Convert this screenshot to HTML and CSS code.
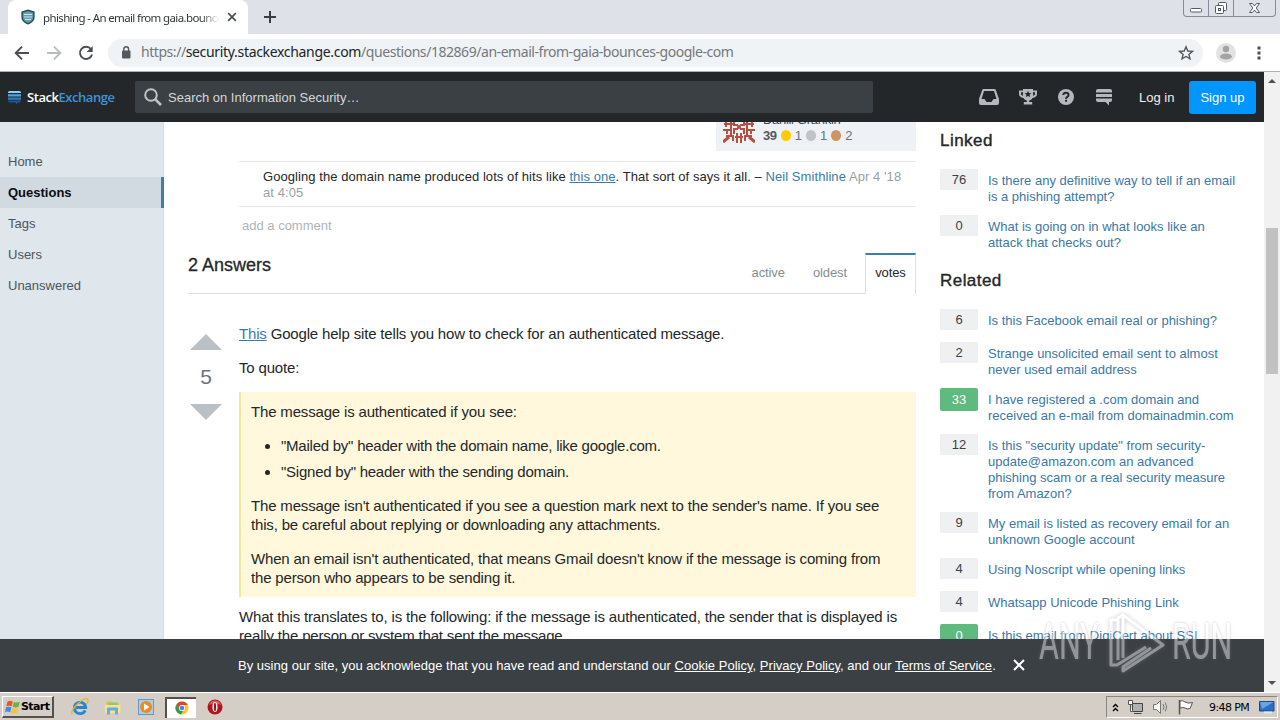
FILE: index.html
```html
<!DOCTYPE html>
<html lang="en">
<head>
  <meta charset="UTF-8">
  <title>phishing - An email from gaia.bounces.google.com</title>
  <link rel="stylesheet" href="styles.css">
</head>
<body>
  <div class="tabstrip">
    <div class="tab">
      <svg class="favicon" width="16" height="16" viewBox="0 0 16 16"><path d="M8 0.5 14.6 2.6V8c0 3.8-2.800 6-6.600 7.500C4.200 14 1.400 11.800 1.400 8V2.600z" fill="#2b4a57"/><path d="M8 2 13.200 3.700V8c0 3-2.200 4.800-5.200 6-3-1.200-5.200-3-5.200-6V3.700z" fill="#5d9fb0"/><path d="M4 5.500h8M4 8h8M5 10.500h6" stroke="#cfe6ea" stroke-width="1.200"/></svg>
      <span class="tab-title">phishing - An email from gaia.bounce</span>
      <svg class="tab-close" width="10" height="10" viewBox="0 0 10 10"><path d="M1.200 1.200 8.800 8.800M8.800 1.200 1.200 8.800" stroke="#4c5054" stroke-width="1.700"/></svg>
    </div>
    <svg class="new-tab" width="12" height="12" viewBox="0 0 12 12"><path d="M6 0v12M0 6h12" stroke="#3a3d42" stroke-width="2"/></svg>
    <div class="window-buttons">
      <span class="wb"><svg width="24" height="16" viewBox="0 0 24 16"><rect x="6.500" y="8.500" width="11" height="3.500" rx="1" fill="#fff" stroke="#555b66"/></svg></span>
      <span class="wb"><svg width="24" height="16" viewBox="0 0 24 16"><rect x="9.500" y="2.500" width="8" height="8" rx="1" fill="#fff" stroke="#555b66"/><rect x="6.500" y="5.500" width="8" height="8" rx="1" fill="#fff" stroke="#555b66"/><rect x="9.500" y="8.500" width="2" height="2" fill="none" stroke="#555b66"/></svg></span>
      <span class="wb wb-close"><svg width="40" height="16" viewBox="0 0 40 16"><path d="M15.500 3.500h3l2 2.500 2-2.500h3l-3.300 4.500 3.300 4.500h-3l-2-2.500-2 2.500h-3l3.300-4.500z" fill="#fff" stroke="#555b66"/></svg></span>
    </div>
  </div>

  <div class="toolbar">
    <svg class="nav-icon" width="16" height="16" viewBox="0 0 16 16"><path d="M15 8H2.500M8 1.700 1.700 8 8 14.300" fill="none" stroke="#4b4f54" stroke-width="1.900"/></svg>
    <svg class="nav-icon" width="16" height="16" viewBox="0 0 16 16"><path d="M1 8h12.500M8 1.700 14.300 8 8 14.300" fill="none" stroke="#b9bbbe" stroke-width="1.900"/></svg>
    <svg class="nav-icon" width="16" height="16" viewBox="0 0 16 16"><path d="M13 4.200A6.100 6.100 0 1 0 14 9.500" fill="none" stroke="#4b4f54" stroke-width="1.900"/><path d="M14.700 1v6h-6z" fill="#4b4f54"/></svg>
    <div class="address">
      <svg class="lock" width="10" height="13" viewBox="0 0 10 13"><rect x="1" y="4.500" width="8.500" height="8" rx="1" fill="#55595e"/><path d="M2.800 5V3.200a2.400 2.400 0 0 1 4.800 0V5" fill="none" stroke="#55595e" stroke-width="1.400"/></svg>
      <span class="url">https://<b>security.stackexchange.com</b>/questions/182869/an-email-from-gaia-bounces-google-com</span>
      <svg class="star" width="16" height="16" viewBox="0 0 16 16"><path d="M8 1.800 9.800 6l4.600.4-3.500 3 1.100 4.500L8 11.500l-4 2.400 1.100-4.500-3.500-3L6.200 6z" fill="none" stroke="#54585d" stroke-width="1.400"/></svg>
    </div>
    <svg class="avatar" width="20" height="20" viewBox="0 0 20 20"><circle cx="10" cy="10" r="10" fill="#e2e2e2"/><circle cx="10" cy="6" r="3.200" fill="#a3a3a3"/><ellipse cx="10" cy="13.500" rx="6" ry="3" fill="#a3a3a3"/></svg>
    <svg class="menu-dots" width="4" height="14" viewBox="0 0 4 14"><path d="M.5.500h3v3h-3zM.5 5.500h3v3h-3zM.5 10.500h3v3h-3z" fill="#4b4f54"/></svg>
  </div>

  <div class="viewport">
    <div class="page">
      <header class="topbar">
        <div class="logo">
          <svg width="13" height="15" viewBox="0 0 13 15"><path d="M0 2.500Q0 1 1.500 1h10Q13 1 13 2.500V3H0z" fill="#8fd0f5"/><path d="M0 4.200h13v2.300H0z" fill="#4fa3e0"/><path d="M0 7.500h13v2.300H0z" fill="#2c7cc4"/><path d="M0 10.600h13q0 1.900-1.500 1.900H10L8 14.500v-2H1.500Q0 12.500 0 10.600z" fill="#1f5796"/></svg>
          <span class="logo-text">Stack<em>Exchange</em></span>
        </div>
        <div class="search">
          <svg width="20" height="20" viewBox="0 0 20 20"><circle cx="8" cy="8" r="5.800" fill="none" stroke="#c0c4c8" stroke-width="2"/><path d="m12.300 12.300 5.700 5.700" stroke="#c0c4c8" stroke-width="2.600"/></svg>
          <span>Search on Information Security…</span>
        </div>
        <div class="top-icons">
          <svg width="20" height="18" viewBox="0 0 20 18"><path fill-rule="evenodd" d="M4.500 1h11q1 0 1.300 1L20 11v4q0 2-2 2H2q-2 0-2-2v-4L3.200 2Q3.500 1 4.500 1zM5 3 2.500 11h3l2 3h5l2-3h3L15 3z" fill="#b5b9bd"/></svg>
          <svg width="18" height="18" viewBox="0 0 18 18"><path fill-rule="evenodd" d="M4 1h10v1.500h4V6q0 3-4.500 4-1 2-3.300 2.500V14h3v2.500H4.800V14h3v-1.500Q5.500 12 4.500 10 0 9 0 6V2.500h4zM2 4.300V6q0 1.200 2 1.800V4.300zM14 4.300v3.500q2-.6 2-1.800V4.300z" fill="#b5b9bd"/><path d="m9 2.800 1 2.200 2.300.2-1.700 1.600.5 2.300L9 7.900 6.900 9.100l.5-2.300-1.700-1.600L8 5z" fill="#242729"/></svg>
          <svg width="18" height="18" viewBox="0 0 18 18"><circle cx="9" cy="9" r="8" fill="#b5b9bd"/><path d="M6.300 7Q6.500 4.700 9 4.700T11.600 7Q11.600 8.200 10.300 8.900T9.100 10.800M9.100 11.800v2" fill="none" stroke="#242729" stroke-width="1.900"/></svg>
          <svg width="18" height="18" viewBox="0 0 18 18"><path d="M3 1h12q2 0 2 2v1.500H1V3q0-2 2-2zM1 6h16v3H1zM1 10.500h16V12q0 2-2 2h-1v3.500L10.500 14H3q-2 0-2-2z" fill="#b5b9bd"/></svg>
        </div>
        <a class="login">Log in</a>
        <a class="signup">Sign up</a>
      </header>

      <div class="content">
        <nav class="left-nav">
          <a>Home</a>
          <a class="current">Questions</a>
          <a>Tags</a>
          <a>Users</a>
          <a>Unanswered</a>
        </nav>

        <main class="main">
          <div class="user-card">
            <svg width="32" height="32" viewBox="0 0 32 32"><g stroke="#b5503f" stroke-width="2" fill="none"><path d="M1 13h9M22 13h9M0 19h9M23 19h9M3 25h8M21 25h8M3 8v8M8 8v16M24 8v16M29 8v8M4 18v5M28 18v5"/><path d="M11 9v5h4M21 9v5h-4M11 23v-5h4M21 23v-5h-4M12 26h8M14 22v10M18 22v10M10 25v5M22 25v5"/><path d="M0 31l6-5M32 31l-6-5" stroke-width="3"/></g><circle cx="16" cy="16" r="2" fill="#b5503f"/></svg>
            <div class="user-info">
              <a class="user-name">Daniil Grankin</a>
              <div class="rep"><b>39</b><i class="gold"></i>1<i class="silver"></i>1<i class="bronze"></i>2</div>
            </div>
          </div>

          <div class="comments">
            <p class="comment">Googling the domain name produced lots of hits like <a class="under">this one</a>. That sort of says it all. – <a>Neil Smithline</a> <small>Apr 4 '18<br>at 4:05</small></p>
            <a class="add-comment">add a comment</a>
          </div>

          <div class="answers-head">
            <h2>2 Answers</h2>
            <div class="sort">
              <a>active</a>
              <a>oldest</a>
              <a class="on">votes</a>
            </div>
          </div>

          <div class="answer">
            <div class="votes">
              <span class="up"></span>
              <span class="count">5</span>
              <span class="down"></span>
            </div>
            <div class="post">
              <p><a class="under">This</a> Google help site tells you how to check for an authenticated message.</p>
              <p>To quote:</p>
              <blockquote>
                <p>The message is authenticated if you see:</p>
                <ul>
                  <li>"Mailed by" header with the domain name, like google.com.</li>
                  <li>"Signed by" header with the sending domain.</li>
                </ul>
                <p>The message isn't authenticated if you see a question mark next to the sender's name. If you see<br>this, be careful about replying or downloading any attachments.</p>
                <p>When an email isn't authenticated, that means Gmail doesn't know if the message is coming from<br>the person who appears to be sending it.</p>
              </blockquote>
              <p>What this translates to, is the following: if the message is authenticated, the sender that is displayed is<br>really the person or system that sent the message.</p>
            </div>
          </div>
        </main>

        <aside class="sidebar">
          <h3>Linked</h3>
          <div class="link-row"><span class="score">76</span><a>Is there any definitive way to tell if an email<br>is a phishing attempt?</a></div>
          <div class="link-row"><span class="score">0</span><a>What is going on in what looks like an<br>attack that checks out?</a></div>
          <h3 class="related">Related</h3>
          <div class="link-row"><span class="score">6</span><a>Is this Facebook email real or phishing?</a></div>
          <div class="link-row"><span class="score">2</span><a>Strange unsolicited email sent to almost<br>never used email address</a></div>
          <div class="link-row"><span class="score accepted">33</span><a>I have registered a .com domain and<br>received an e-mail from domainadmin.com</a></div>
          <div class="link-row"><span class="score">12</span><a>Is this "security update" from security-<br>update@amazon.com an advanced<br>phishing scam or a real security measure<br>from Amazon?</a></div>
          <div class="link-row"><span class="score">9</span><a>My email is listed as recovery email for an<br>unknown Google account</a></div>
          <div class="link-row"><span class="score">4</span><a>Using Noscript while opening links</a></div>
          <div class="link-row"><span class="score">4</span><a>Whatsapp Unicode Phishing Link</a></div>
          <div class="link-row"><span class="score accepted">0</span><a>Is this email from DigiCert about SSL</a></div>
        </aside>
      </div>

      <div class="cookie-bar">
        <span class="cookie-text">By using our site, you acknowledge that you have read and understand our <u>Cookie Policy</u>, <u>Privacy Policy</u>, and our <u>Terms of Service</u>.</span>
        <svg width="12" height="12" viewBox="0 0 12 12"><path d="m1 1 10 10M11 1 1 11" stroke="#fff" stroke-width="2"/></svg>
      </div>
    </div>

    <div class="scrollbar">
      <span class="arrow-up"></span>
      <span class="thumb"></span>
      <span class="arrow-down"></span>
    </div>
  </div>

  <div class="taskbar">
    <div class="start">
      <svg width="16" height="16" viewBox="0 0 16 16"><path d="M2.500 2.500Q5 1 7.800 2.500L6.700 7.300Q4 6 1.300 7.300z" fill="#e8562a"/><path d="M8.800 3Q11.500 4.300 14.800 2.800L13.500 7.800Q10.500 9 7.700 7.800z" fill="#6cb33f"/><path d="M1 8.400Q3.500 7.200 6.400 8.400L5.200 13.200Q2.500 12 0 13z" fill="#3b8ede"/><path d="M7.400 8.900Q10.200 10.200 13.200 8.900L12 13.700Q9 15 6.200 13.700z" fill="#f6c231"/></svg>
      <b>Start</b>
    </div>
    <div class="quick">
      <svg width="18" height="18" viewBox="0 0 18 18"><path d="M14.200 12.300A5.700 5.700 0 1 1 14.700 9.500H5" fill="none" stroke="#2786d2" stroke-width="2.800"/><path d="M1 16.500Q-.5 13 6 6.500T16.500 1Q18 2.500 15.500 6" fill="none" stroke="#e8b52c" stroke-width="1.300"/></svg>
      <svg width="18" height="18" viewBox="0 0 18 18"><path d="M2 3h6l1 2h6.500v10H2z" fill="#e9c962"/><path d="M3.500 4.500h10v4h-10z" fill="#8cc77c"/><path d="M1 7h15.500v8H1z" fill="#f7e293"/><path d="M3 16.500V10.500q0-1 1-1h9q1 0 1 1v6h-3v-4H6v4z" fill="#5eb0e0"/></svg>
      <svg width="18" height="18" viewBox="0 0 18 18"><rect x="1.500" y="1.500" width="15" height="15" fill="#a9cfed" stroke="#5a9bd0"/><circle cx="9" cy="9" r="6" fill="#f08a1c"/><path d="M7 5.500 12.500 9 7 12.500z" fill="#fff"/></svg>
      <span class="active-app"><svg width="14" height="14" viewBox="0 0 14 14"><circle cx="7" cy="7" r="6.500" fill="#f9c923"/><path d="M1.300 3.800A6.500 6.500 0 0 1 12.800 4H7L4.500 9z" fill="#dc4437"/><path d="M1.300 3.800 4.500 9l3.500 1-2 3.400A6.500 6.500 0 0 1 1.300 3.800z" fill="#2c9c55"/><circle cx="7" cy="7" r="3" fill="#fff"/><circle cx="7" cy="7" r="2.300" fill="#4680e8"/></svg></span>
      <svg width="16" height="16" viewBox="0 0 16 16"><circle cx="8" cy="8" r="7.500" fill="#b3151c"/><path d="M2 6a6.300 6.300 0 0 1 12 0Q8 3 2 6z" fill="#dc5b5b"/><ellipse cx="8" cy="8" rx="2.600" ry="5" fill="#f3e6e6"/><ellipse cx="8" cy="8" rx="1" ry="4.200" fill="#931118"/></svg>
    </div>
    <div class="tray">
      <svg width="7" height="9" viewBox="0 0 7 9"><path d="M1 4 3.500 1.500 6 4M1 8 3.500 5.500 6 8" fill="none" stroke="#000" stroke-width="1.400"/></svg>
      <svg width="17" height="16" viewBox="0 0 17 16"><path d="M5.500 4.500h10v8h-10z" fill="#aeb0b2" stroke="#444"/><path d="M7 14.500h7.500" stroke="#444"/><path d="M1.500 1.500h4v4h-4zM3.500 5.500v7h2" fill="#fff" stroke="#555"/></svg>
      <svg width="17" height="16" viewBox="0 0 17 16"><path d="M1.500 5.500h3l4-4v13l-4-4h-3z" fill="#fff" stroke="#777"/><path d="M11 5q2 3 0 6M13.200 3.500q3 4.500 0 9" fill="none" stroke="#777"/></svg>
      <svg width="17" height="16" viewBox="0 0 17 16"><path d="M2.500 1v14.500" stroke="#555" stroke-width="1.500"/><path d="M3 2q3-1 5 1 3 2 7.500.5L13 9.500q-3 1-5-.5-2-1-5 0z" fill="#fff" stroke="#555"/></svg>
      <span class="clock">9:48 PM</span>
      <svg width="16" height="14" viewBox="0 0 16 14"><path d="M.5 1.500h14.500v9.500H.5z" fill="#2a6fc4" stroke="#234a80"/><path d="M1 2h13.500L3 9z" fill="#69a4e6"/><path d="M5 12.500h8" stroke="#dfe7ef" stroke-width="2"/></svg>
    </div>
  </div>

  <div class="watermark">
    <span>ANY</span>
    <svg width="60" height="64" viewBox="0 0 60 64"><path d="M17 48V5L57 35 17 61V57L45 38M11 10H5V55L11 55 40 37M17 5 12 8V50" fill="none" stroke="#fff" stroke-width="3" stroke-linejoin="round"/></svg>
    <span>RUN</span>
  </div>
</body>
</html>
```
FILE: styles.css
```css
* {
  box-sizing: border-box;
}

body {
  margin: 0;
  width: 1280px;
  height: 720px;
  overflow: hidden;
  display: flex;
  flex-direction: column;
  position: relative;
  font-family: "Liberation Sans", Arial, sans-serif;
  font-size: 13px;
  color: #242729;
}

svg {
  display: block;
  flex: none;
}

/* browser chrome */
.tabstrip {
  height: 34px;
  flex: none;
  display: flex;
  align-items: center;
  background: #dee1e8;
  padding-left: 8px;
}

.tab {
  width: 240px;
  height: 34px;
  padding: 0 11px 0 12px;
  display: flex;
  align-items: center;
  background: #fff;
  border-radius: 8px 8px 0 0;
}

.tab-title {
  width: 176px;
  margin: 0 8px 0 7px;
  overflow: hidden;
  white-space: nowrap;
  font-family: "Noto Sans", sans-serif;
  font-size: 11.5px;
  letter-spacing: -0.63px;
  color: #33363a;
  -webkit-mask-image: linear-gradient(90deg, #000 90%, transparent);
}

.new-tab {
  margin-left: 16px;
}

.window-buttons {
  margin: 0 4px 0 auto;
  align-self: flex-start;
  display: flex;
  height: 17px;
  border: 1px solid #858b98;
  border-top: 0;
  border-radius: 0 0 4px 4px;
}

.wb {
  width: 25px;
  border-right: 1px solid #858b98;
}

.wb-close {
  width: 41px;
  border-right: 0;
}

.toolbar {
  height: 38px;
  flex: none;
  display: flex;
  align-items: center;
  padding-left: 14px;
  background: #fff;
  border-bottom: 1px solid #aeb1b4;
}

.nav-icon {
  margin-right: 16px;
}

.address {
  width: 1095px;
  height: 28px;
  margin-left: -2px;
  border-radius: 14px;
  background: #f0f3f6;
  display: flex;
  align-items: center;
  padding: 0 9px 0 13px;
}

.url {
  margin: -2px 0 0 10px;
  font-family: "Noto Sans", sans-serif;
  font-size: 14px;
  letter-spacing: -0.45px;
  color: #74787d;
  white-space: nowrap;
}

.url b {
  font-weight: normal;
  letter-spacing: -0.32px;
  color: #202327;
}

.star {
  margin-left: auto;
}

.avatar {
  margin-left: 13px;
}

.menu-dots {
  margin-left: 21px;
}

.viewport {
  height: 620px;
  flex: none;
  display: flex;
}

.page {
  width: 1264px;
  position: relative;
  overflow: hidden;
  background: #fff;
}

/* site header */
.topbar {
  height: 50px;
  display: flex;
  align-items: center;
  background: #242729;
  position: relative;
  z-index: 2;
}

.logo {
  width: 135px;
  padding-left: 8px;
  display: flex;
  align-items: center;
}

.logo-text {
  margin-left: 6px;
  font-family: "Open Sans", sans-serif;
  font-size: 13px;
  font-weight: 600;
  letter-spacing: -0.45px;
  color: #fff;
}

.logo-text em {
  font-style: normal;
  color: #3e94d8;
}

.search {
  width: 738px;
  height: 32px;
  background: #3b4045;
  border-radius: 2px;
  display: flex;
  align-items: center;
  padding-left: 8px;
  color: #d4d7da;
}

.search span {
  margin-left: 5px;
}

.top-icons {
  margin-left: 106px;
  display: flex;
  align-items: center;
  gap: 20px;
}

.login {
  margin-left: 26px;
  color: #eff0f1;
}

.signup {
  margin: 0 8px 0 auto;
  width: 67px;
  height: 33px;
  line-height: 33px;
  text-align: center;
  border-radius: 3px;
  background: #0095ff;
  color: #fff;
}

.content {
  height: 570px;
  display: flex;
}

.left-nav {
  width: 164px;
  padding-top: 24px;
  background: #dfe6ec;
  border-right: 1px solid #d6dde3;
  color: #4d555c;
}

.left-nav a {
  display: block;
  height: 31px;
  line-height: 31px;
  padding-left: 8px;
}

.left-nav .current {
  background: #d2dae1;
  border-right: 3px solid #3f7fa5;
  margin-right: -1px;
  color: #0c0d0e;
  font-weight: bold;
}

.main {
  width: 728px;
  margin-left: 24px;
}

/* scrolled halfway under the site header */
.user-card {
  width: 200px;
  height: 50px;
  margin: -21px 0 0 auto;
  padding: 10px 7px;
  display: flex;
  background: #eef1f5;
}

.user-info {
  margin-left: 8px;
  line-height: 17px;
  color: #6a737c;
}

.user-name {
  letter-spacing: -0.3px;
  color: #3b4a5a;
}

.rep {
  display: flex;
  align-items: center;
  margin-top: -1px;
}

.rep b {
  letter-spacing: -0.4px;
  color: #535a60;
}

.rep i {
  width: 10px;
  height: 11px;
  border-radius: 50%;
  margin: 0 4px;
}

.gold { background: #ffcc01; }
.silver { background: #bfc4c8; }
.bronze { background: #cf9463; }

.comments {
  margin: 10px 0 0 51px;
}

.comment {
  height: 46px;
  margin: 0;
  padding: 7px 0 0 24px;
  border-top: 1px solid #e4e6e8;
  border-bottom: 1px solid #e4e6e8;
  line-height: 16px;
  letter-spacing: 0.07px;
  white-space: nowrap;
}

.comment a,
.post a {
  color: #3a7baa;
}

.under {
  text-decoration: underline;
}

.comment small {
  font-size: 13px;
  color: #9a9fa4;
}

.add-comment {
  display: block;
  margin: 11px 0 0 3px;
  line-height: 16px;
  color: #b0b4b8;
}

.answers-head {
  height: 41px;
  margin-top: 19px;
  display: flex;
  justify-content: space-between;
  border-bottom: 1px solid #dcdfe1;
}

.answers-head h2 {
  margin: 1px 0 0;
  font-size: 18px;
  line-height: 22px;
  font-weight: normal;
  -webkit-text-stroke: 0.3px;
}

.sort {
  display: flex;
  color: #848d95;
  line-height: 40px;
}

.sort a {
  padding-right: 28px;
  letter-spacing: -0.1px;
}

.sort .on {
  width: 51px;
  height: 41px;
  margin-left: -10px;
  padding: 0;
  text-align: center;
  line-height: 36px;
  background: #fff;
  border: 1px solid #dcdfe1;
  border-top: 2px solid #3f7fa5;
  border-bottom: 0;
  color: #242729;
}

.answer {
  display: flex;
  padding-top: 30px;
}

.votes {
  width: 36px;
  margin-right: 15px;
  padding-top: 10px;
  display: flex;
  flex-direction: column;
  align-items: center;
}

.up,
.down {
  border-left: 16px solid transparent;
  border-right: 16px solid transparent;
}

.up { border-bottom: 16px solid #bbc0c4; }
.down { border-top: 16px solid #bbc0c4; }

.count {
  height: 54px;
  line-height: 54px;
  font-size: 21px;
  color: #6a737c;
}

.post {
  width: 677px;
  font-size: 15px;
  line-height: 19px;
  letter-spacing: -0.17px;
  white-space: nowrap;
}

.post p {
  margin: 0 0 15px;
}

.post blockquote {
  height: 205px;
  margin: 0 0 10px;
  padding: 10px;
  background: #fff8dc;
  border-left: 2px solid #f4e796;
}

.post ul {
  margin: 0 0 15px;
  padding-left: 30px;
}

.post li {
  margin-bottom: 7px;
  letter-spacing: -0.24px;
}

.post li:last-child {
  margin-bottom: 0;
}

.sidebar {
  width: 300px;
  margin-left: 24px;
  padding-top: 8px;
}

.sidebar h3 {
  margin: 0 0 17px;
  font-size: 17px;
  line-height: 22px;
  font-weight: normal;
  letter-spacing: 0.45px;
  -webkit-text-stroke: 0.4px;
}

.sidebar .related {
  margin-top: 21px;
}

.link-row {
  display: flex;
  align-items: flex-start;
  margin-bottom: 12px;
  line-height: 16px;
  white-space: nowrap;
}

.link-row a {
  margin: 4px 0 -2px 10px;
  color: #3b78a6;
}

.score {
  flex: none;
  width: 38px;
  height: 21px;
  line-height: 21px;
  text-align: center;
  background: #eff0f1;
  color: #3b4045;
}

.accepted {
  height: 23px;
  line-height: 23px;
  border-radius: 2px;
  background: #5fba7d;
  color: #fff;
}

.cookie-bar {
  position: absolute;
  left: 0;
  right: 0;
  bottom: 0;
  height: 53px;
  padding-left: 238px;
  display: flex;
  align-items: center;
  background: #3b4045;
  color: #fff;
  letter-spacing: 0.02px;
  white-space: nowrap;
}

.cookie-bar svg {
  margin: -2px 0 0 17px;
}

.scrollbar {
  width: 16px;
  display: flex;
  flex-direction: column;
  align-items: center;
  background: #f1f1f1;
}

.arrow-up,
.arrow-down {
  border-left: 4px solid transparent;
  border-right: 4px solid transparent;
}

.arrow-up {
  margin-top: 7px;
  border-bottom: 4px solid #505050;
}

.thumb {
  width: 12px;
  height: 146px;
  margin-top: 145px;
  background: #c1c1c1;
}

.arrow-down {
  margin: auto 0 7px;
  border-top: 4px solid #505050;
}

/* windows taskbar */
.taskbar {
  height: 28px;
  display: flex;
  align-items: center;
  padding: 3px 2px 2px;
  background: #d5cec6;
  border-top: 1px solid #fff;
  color: #000;
}

.start {
  width: 52px;
  height: 22px;
  padding-left: 2px;
  display: flex;
  align-items: center;
  border: 1px solid #fff;
  border-right: 2px solid #55514c;
  border-bottom: 2px solid #55514c;
  font-family: "DejaVu Sans", sans-serif;
  font-size: 11px;
  letter-spacing: -0.6px;
}

.quick {
  margin-left: 17px;
  display: flex;
  align-items: center;
}

.quick > svg {
  margin-right: 15px;
}

.active-app {
  width: 31px;
  height: 21px;
  margin: 0 11px 0 -5px;
  display: flex;
  align-items: center;
  justify-content: center;
  background: #fff;
  border-top: 2px solid #55514c;
  border-left: 2px solid #55514c;
}

.tray {
  width: 172px;
  height: 22px;
  margin-left: auto;
  padding-left: 5px;
  display: flex;
  align-items: center;
  border: 1px solid #fff;
  border-top-color: #8a857e;
  border-left-color: #8a857e;
}

.tray svg + svg {
  margin-left: 8px;
}

.clock {
  margin: 0 10px 0 15px;
  font-family: "DejaVu Sans", sans-serif;
  font-size: 11px;
  letter-spacing: -0.6px;
  white-space: nowrap;
}

.watermark {
  position: absolute;
  left: 1039px;
  top: 610px;
  display: flex;
  align-items: center;
  opacity: 0.45;
  color: #fff;
  font-family: Roboto, sans-serif;
  font-size: 50px;
  text-shadow: 0 0 4px #888;
}

.watermark span {
  width: 58px;
  transform: scaleX(0.61);
  transform-origin: left;
}

.watermark svg {
  margin: 0 6px 0 9px;
  filter: drop-shadow(0 0 2px #888);
}
```
